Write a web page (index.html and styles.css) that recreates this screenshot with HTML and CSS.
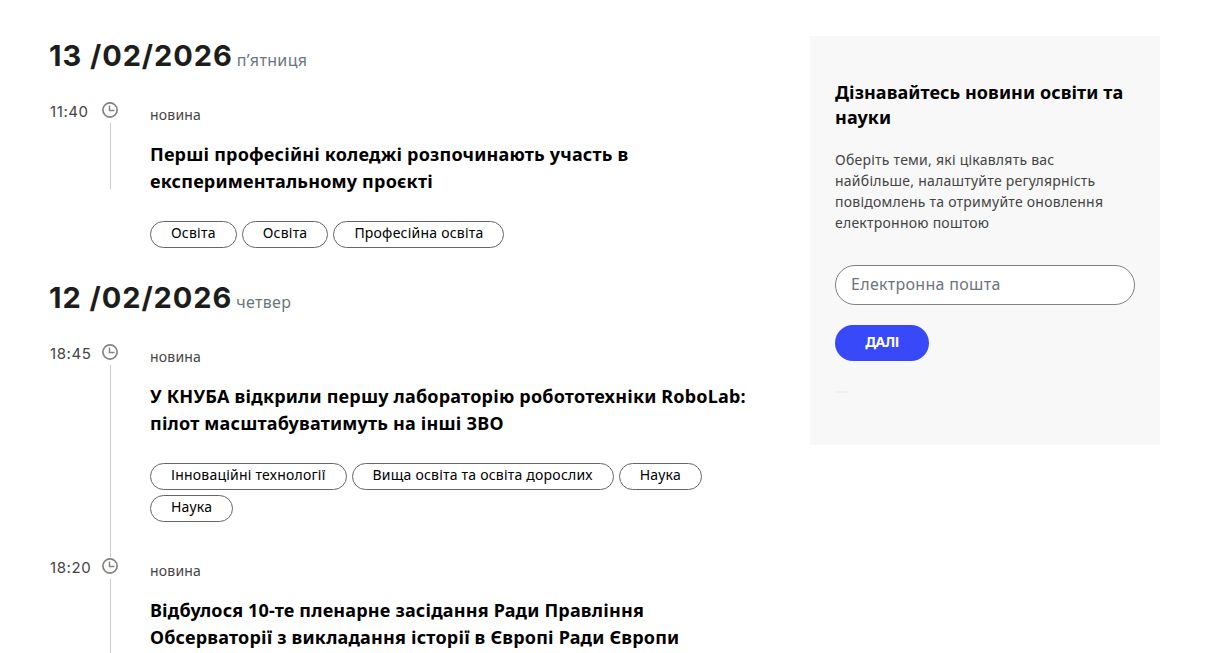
FILE: index.html
```html
<!DOCTYPE html>
<html lang="uk">
<head>
  <meta charset="UTF-8" />
  <meta name="viewport" content="width=device-width, initial-scale=1.0"/>
  <title>Новини</title>
  <link rel="stylesheet" href="styles.css">
</head>
<body>

<svg class="sprite" width="0" height="0">
  <symbol id="clock" viewBox="0 0 16 16">
    <circle cx="8" cy="8" r="7.1" fill="none" stroke="#84827e" stroke-width="1.7"/>
    <path d="M7.5 3.5v5h5" fill="none" stroke="#84827e" stroke-width="1.4"/>
  </symbol>
</svg>

<div class="container">
  <main class="news">
    <section class="day">
      <h2 class="date">13 /02/2026 <span class="weekday">п’ятниця</span></h2>
      <article class="item last">
        <time class="time">11:40</time>
        <div class="track"><svg class="clock"><use href="#clock"/></svg></div>
        <div class="content">
          <div class="type">новина</div>
          <h3 class="title">Перші професійні коледжі розпочинають участь в<br>експериментальному проєкті</h3>
          <div class="tags">
            <a class="tag">Освіта</a>
            <a class="tag">Освіта</a>
            <a class="tag">Професійна освіта</a>
          </div>
        </div>
      </article>
    </section>

    <section class="day">
      <h2 class="date">12 /02/2026 <span class="weekday">четвер</span></h2>
      <article class="item">
        <time class="time">18:45</time>
        <div class="track"><svg class="clock"><use href="#clock"/></svg></div>
        <div class="content">
          <div class="type">новина</div>
          <h3 class="title">У КНУБА відкрили першу лабораторію робототехніки RoboLab:<br>пілот масштабуватимуть на інші ЗВО</h3>
          <div class="tags">
            <a class="tag">Інноваційні технології</a>
            <a class="tag">Вища освіта та освіта дорослих</a>
            <a class="tag">Наука</a>
            <a class="tag">Наука</a>
          </div>
        </div>
      </article>
      <article class="item">
        <time class="time">18:20</time>
        <div class="track"><svg class="clock"><use href="#clock"/></svg></div>
        <div class="content">
          <div class="type">новина</div>
          <h3 class="title">Відбулося 10-те пленарне засідання Ради Правління<br>Обсерваторії з викладання історії в Європі Ради Європи</h3>
        </div>
      </article>
    </section>
  </main>

  <aside class="subscribe">
    <h4 class="subscribe-title">Дізнавайтесь новини освіти та<br>науки</h4>
    <p class="subscribe-text">Оберіть теми, які цікавлять вас<br>найбільше, налаштуйте регулярність<br>повідомлень та отримуйте оновлення<br>електронною поштою</p>
    <input class="email" type="email" placeholder="Електронна пошта">
    <button class="next">ДАЛІ</button>
    <div class="progress"></div>
  </aside>
</div>

</body>
</html>
```

FILE: styles.css
```css
* { box-sizing: border-box; }
body { font-family: "Noto Sans", "Open Sans", sans-serif; background: #fff; color: #000; margin: 0; }
h2, h3, h4, p { margin: 0; }
.sprite { display: block; }
.container { display: flex; justify-content: space-between; align-items: flex-start; width: 1110px; margin-left: 50px; padding-top: 36px; }

.news { width: 710px; padding-top: 5px; }
.date { height: 60px; margin-left: -1px; font-family: Inter, sans-serif; font-size: 29px; line-height: 30px; font-weight: 700; letter-spacing: 0.95px; color: #1d1d1b; white-space: nowrap; }
.weekday { font-family: "Noto Sans", sans-serif; font-size: 16px; font-weight: 400; letter-spacing: 0.35px; color: #6c757d; margin-left: -4px; }
.item { display: flex; }
.time { width: 52px; font-family: Inter, sans-serif; font-size: 15px; line-height: 21px; letter-spacing: 0.6px; color: #444; }
.track { display: flex; flex-direction: column; align-items: center; width: 16px; margin-right: 32px; padding-top: 1px; }
.clock { display: block; width: 16px; height: 16px; flex: none; }
.track::after { content: ""; width: 1px; flex: 1; margin-top: 5px; background: #ccc; }
.last .track::after { flex: none; height: 66px; }
.content { flex: 1; padding-bottom: 2px; }
.type { font-size: 14px; line-height: 20px; letter-spacing: 0.2px; color: #444; padding-top: 4px; }
.title { font-size: 18px; line-height: 27px; font-weight: 700; letter-spacing: 0.19px; margin-top: 16px; white-space: nowrap; }
.tags { display: flex; flex-wrap: wrap; gap: 5px; width: 610px; padding: 26px 0 33px; }
.tag { height: 27px; padding: 0 20px; border: 1px solid #666; border-radius: 14px; font-size: 14px; line-height: 22px; letter-spacing: 0.22px; white-space: nowrap; }

.subscribe { width: 350px; height: 409px; padding: 44px 25px 0; background: #f8f8f8; }
.subscribe-title { font-size: 18px; line-height: 25px; font-weight: 700; letter-spacing: 0.07px; white-space: nowrap; }
.subscribe-text { margin-top: 19px; font-size: 14px; line-height: 21px; letter-spacing: 0.24px; color: #444; white-space: nowrap; }
.email { display: block; width: 300px; height: 40px; margin-top: 32px; padding: 0 15px 2px; border: 1px solid #808080; border-radius: 20px; background: #fff; font: 16px "Noto Sans", sans-serif; letter-spacing: 0.3px; }
.email::placeholder { color: #6c757d; opacity: 1; }
.next { display: block; width: 94px; height: 36px; margin-top: 20px; padding: 0 0 3px; border: none; border-radius: 18px; background: #3849f9; color: #fff; font: 700 14px "Noto Sans", sans-serif; letter-spacing: -0.4px; }
.progress { width: 12px; height: 2px; margin-top: 30px; background: #f0f0f0; }
```
